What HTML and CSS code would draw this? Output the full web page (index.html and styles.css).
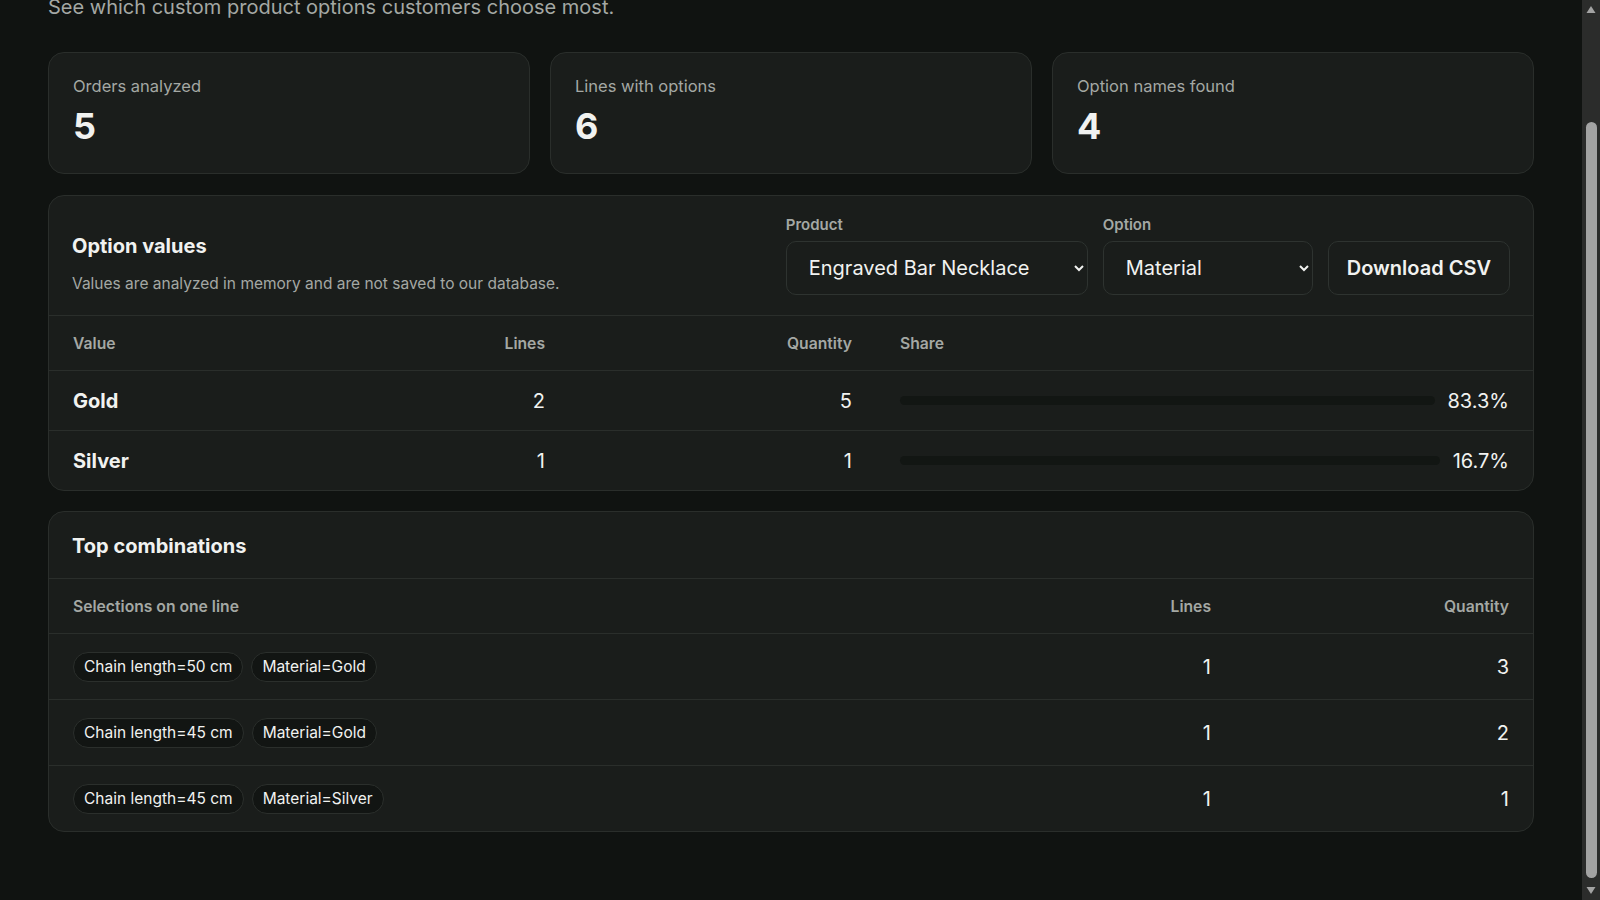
FILE: index.html
```html
<!DOCTYPE html>
<html>
	<head>
		<title>Option insights</title>
		<meta charset="utf-8">
		<link rel="stylesheet" href="styles.css">
	</head>
	<body>
		<div class="page" id="page">
			<header class="intro">
				<h1>Option insights</h1>
				<p class="lede">See which custom product options customers choose most.</p>
			</header>

			<section class="stats">
				<div class="stat">
					<div class="statLabel">Orders analyzed</div>
					<div class="statValue">5</div>
				</div>
				<div class="stat">
					<div class="statLabel">Lines with options</div>
					<div class="statValue">6</div>
				</div>
				<div class="stat">
					<div class="statLabel">Option names found</div>
					<div class="statValue">4</div>
				</div>
			</section>

			<section class="card">
				<div class="cardHead">
					<div class="headText">
						<h2>Option values</h2>
						<p>Values are analyzed in memory and are not saved to our database.</p>
					</div>
					<div class="controls">
						<label class="field">
							<span class="fieldLabel">Product</span>
							<select class="select selectProduct">
								<option selected>Engraved Bar Necklace</option>
								<option>Name Ring</option>
							</select>
						</label>
						<label class="field">
							<span class="fieldLabel">Option</span>
							<select class="select selectOption">
								<option selected>Material</option>
								<option>Chain length</option>
							</select>
						</label>
						<button class="btn" type="button">Download CSV</button>
					</div>
				</div>

				<div class="valuesRow valuesHead">
					<div>Value</div>
					<div class="num">Lines</div>
					<div class="num">Quantity</div>
					<div>Share</div>
				</div>
				<div class="valuesRow">
					<div class="valueName">Gold</div>
					<div class="num">2</div>
					<div class="num">5</div>
					<div class="share">
						<div class="track"></div>
						<span>83.3%</span>
					</div>
				</div>
				<div class="valuesRow">
					<div class="valueName">Silver</div>
					<div class="num">1</div>
					<div class="num">1</div>
					<div class="share">
						<div class="track"></div>
						<span>16.7%</span>
					</div>
				</div>
			</section>

			<section class="card">
				<div class="cardHead simpleHead">
					<h2>Top combinations</h2>
				</div>

				<div class="comboRow comboHead">
					<div>Selections on one line</div>
					<div class="num">Lines</div>
					<div class="num">Quantity</div>
				</div>
				<div class="comboRow">
					<div class="chips">
						<span class="chip">Chain length=50 cm</span>
						<span class="chip">Material=Gold</span>
					</div>
					<div class="num">1</div>
					<div class="num">3</div>
				</div>
				<div class="comboRow">
					<div class="chips">
						<span class="chip">Chain length=45 cm</span>
						<span class="chip">Material=Gold</span>
					</div>
					<div class="num">1</div>
					<div class="num">2</div>
				</div>
				<div class="comboRow">
					<div class="chips">
						<span class="chip">Chain length=45 cm</span>
						<span class="chip">Material=Silver</span>
					</div>
					<div class="num">1</div>
					<div class="num">1</div>
				</div>
			</section>
		</div>

		<!-- scrollbar drawn by hand, the headless window hides the real one -->
		<div class="scrollbar">
			<svg class="arrowUp" width="18" height="18" viewBox="0 0 18 18"><path d="M4.5 13 L9 6 L13.5 13 Z" fill="#a3a3a3"/></svg>
			<div class="thumb"></div>
			<svg class="arrowDown" width="18" height="18" viewBox="0 0 18 18"><path d="M4.5 5 L9 12 L13.5 5 Z" fill="#a3a3a3"/></svg>
		</div>

		<script src="scroll.js"></script>
	</body>
</html>
```

FILE: styles.css
```css
html {
	color-scheme: dark;
	height: 100%;
}

body {
	margin: 0;
	height: 100%;
	overflow: hidden;
	background-color: #101311;
	color: #f1f2f0;
	font-family: Inter, "Noto Sans", sans-serif;
}

.page {
	box-sizing: border-box;
	height: 100%;
	overflow-y: scroll;
	scrollbar-width: none;
	padding: 56px 66px 75px 48px;
}

.scrollbar {
	position: fixed;
	top: 0;
	right: 0;
	bottom: 0;
	width: 18px;
	background-color: #2b2c2b;
}

.arrowUp,
.arrowDown {
	position: absolute;
	left: 0;
	display: block;
}

.arrowUp {
	top: 0;
}

.arrowDown {
	bottom: 0;
}

.thumb {
	position: absolute;
	top: 122px;
	left: 4px;
	right: 3px;
	height: 756px;
	border-radius: 6px;
	background-color: #a3a3a3;
}

.intro h1 {
	margin: 0 0 24px 0;
	font-size: 32px;
	line-height: 40px;
	font-weight: 700;
}

.lede {
	margin: 0 0 31px 0;
	font-size: 20px;
	line-height: 28px;
	color: #a4a8a4;
}

.stats {
	display: grid;
	grid-template-columns: repeat(3, 1fr);
	gap: 20px;
	margin-bottom: 21px;
}

.stat {
	background-color: #1a1d1b;
	border: 1px solid #2a2e2b;
	border-radius: 16px;
	padding: 22px 24px 25px 24px;
}

.statLabel {
	font-size: 16.5px;
	line-height: 22px;
	color: #a4a8a4;
	margin-bottom: 7px;
}

.statValue {
	font-size: 36px;
	line-height: 44px;
	font-weight: 700;
}

.card {
	background-color: #1a1d1b;
	border: 1px solid #2a2e2b;
	border-radius: 16px;
	overflow: hidden;
	margin-bottom: 20px;
}

.card:last-child {
	margin-bottom: 0;
}

.cardHead {
	display: flex;
	justify-content: space-between;
	align-items: flex-end;
	padding: 19px 23px 20px 23px;
	border-bottom: 1px solid #2a2e2b;
}

.cardHead h2 {
	margin: 0;
	font-size: 20px;
	line-height: 26px;
	font-weight: 700;
}

.headText h2 {
	margin-bottom: 14px;
}

.headText p {
	margin: 0;
	font-size: 15.5px;
	line-height: 22px;
	color: #a4a8a4;
}

.simpleHead {
	padding-top: 21px;
	padding-bottom: 19px;
}

.controls {
	display: flex;
	align-items: flex-end;
	gap: 15px;
}

.field {
	display: flex;
	flex-direction: column;
	gap: 6px;
}

.fieldLabel {
	font-size: 15px;
	line-height: 20px;
	font-weight: 600;
	color: #a4a8a4;
}

.select {
	height: 54px;
	background-color: #1a1d1b;
	border: 1px solid #2e3330;
	border-radius: 10px;
	color: #f1f2f0;
	font-family: inherit;
	font-size: 20px;
	padding: 0 12px 0 18px;
}

.selectProduct {
	width: 302px;
}

.selectOption {
	width: 210px;
}

.btn {
	height: 54px;
	padding: 0 18px;
	background-color: #1a1d1b;
	border: 1px solid #2e3330;
	border-radius: 10px;
	color: #f1f2f0;
	font-family: inherit;
	font-size: 20px;
	font-weight: 600;
}

.valuesRow {
	display: grid;
	grid-template-columns: 360px 160px 307px 1fr;
	align-items: center;
	height: 59px;
	border-bottom: 1px solid #2a2e2b;
	font-size: 20px;
}

.valuesRow > div {
	padding: 0 24px;
}

.valuesRow:last-child {
	border-bottom: none;
}

.comboRow {
	display: grid;
	grid-template-columns: 1fr 200px 298px;
	align-items: center;
	height: 65px;
	border-bottom: 1px solid #2a2e2b;
	font-size: 20px;
}

.comboRow > div {
	padding: 0 24px;
}

.comboRow:last-child {
	border-bottom: none;
}

.valuesHead,
.comboHead {
	height: 54px;
	font-size: 15.7px;
	font-weight: 600;
	color: #a4a8a4;
}

.num {
	text-align: right;
}

.valueName {
	font-weight: 700;
}

.share {
	display: flex;
	align-items: center;
	gap: 13px;
}

.track {
	flex: 1;
	height: 9px;
	border-radius: 5px;
	background-color: #121613;
}

.chips {
	display: flex;
	gap: 8px;
}

.chip {
	display: inline-block;
	height: 28px;
	line-height: 28px;
	padding: 0 10px;
	border: 1px solid #2b2f2c;
	border-radius: 15px;
	background-color: #121513;
	font-size: 15.5px;
}
```

FILE: scroll.js
```js
document.getElementById('page').scrollTop = 127;
```
